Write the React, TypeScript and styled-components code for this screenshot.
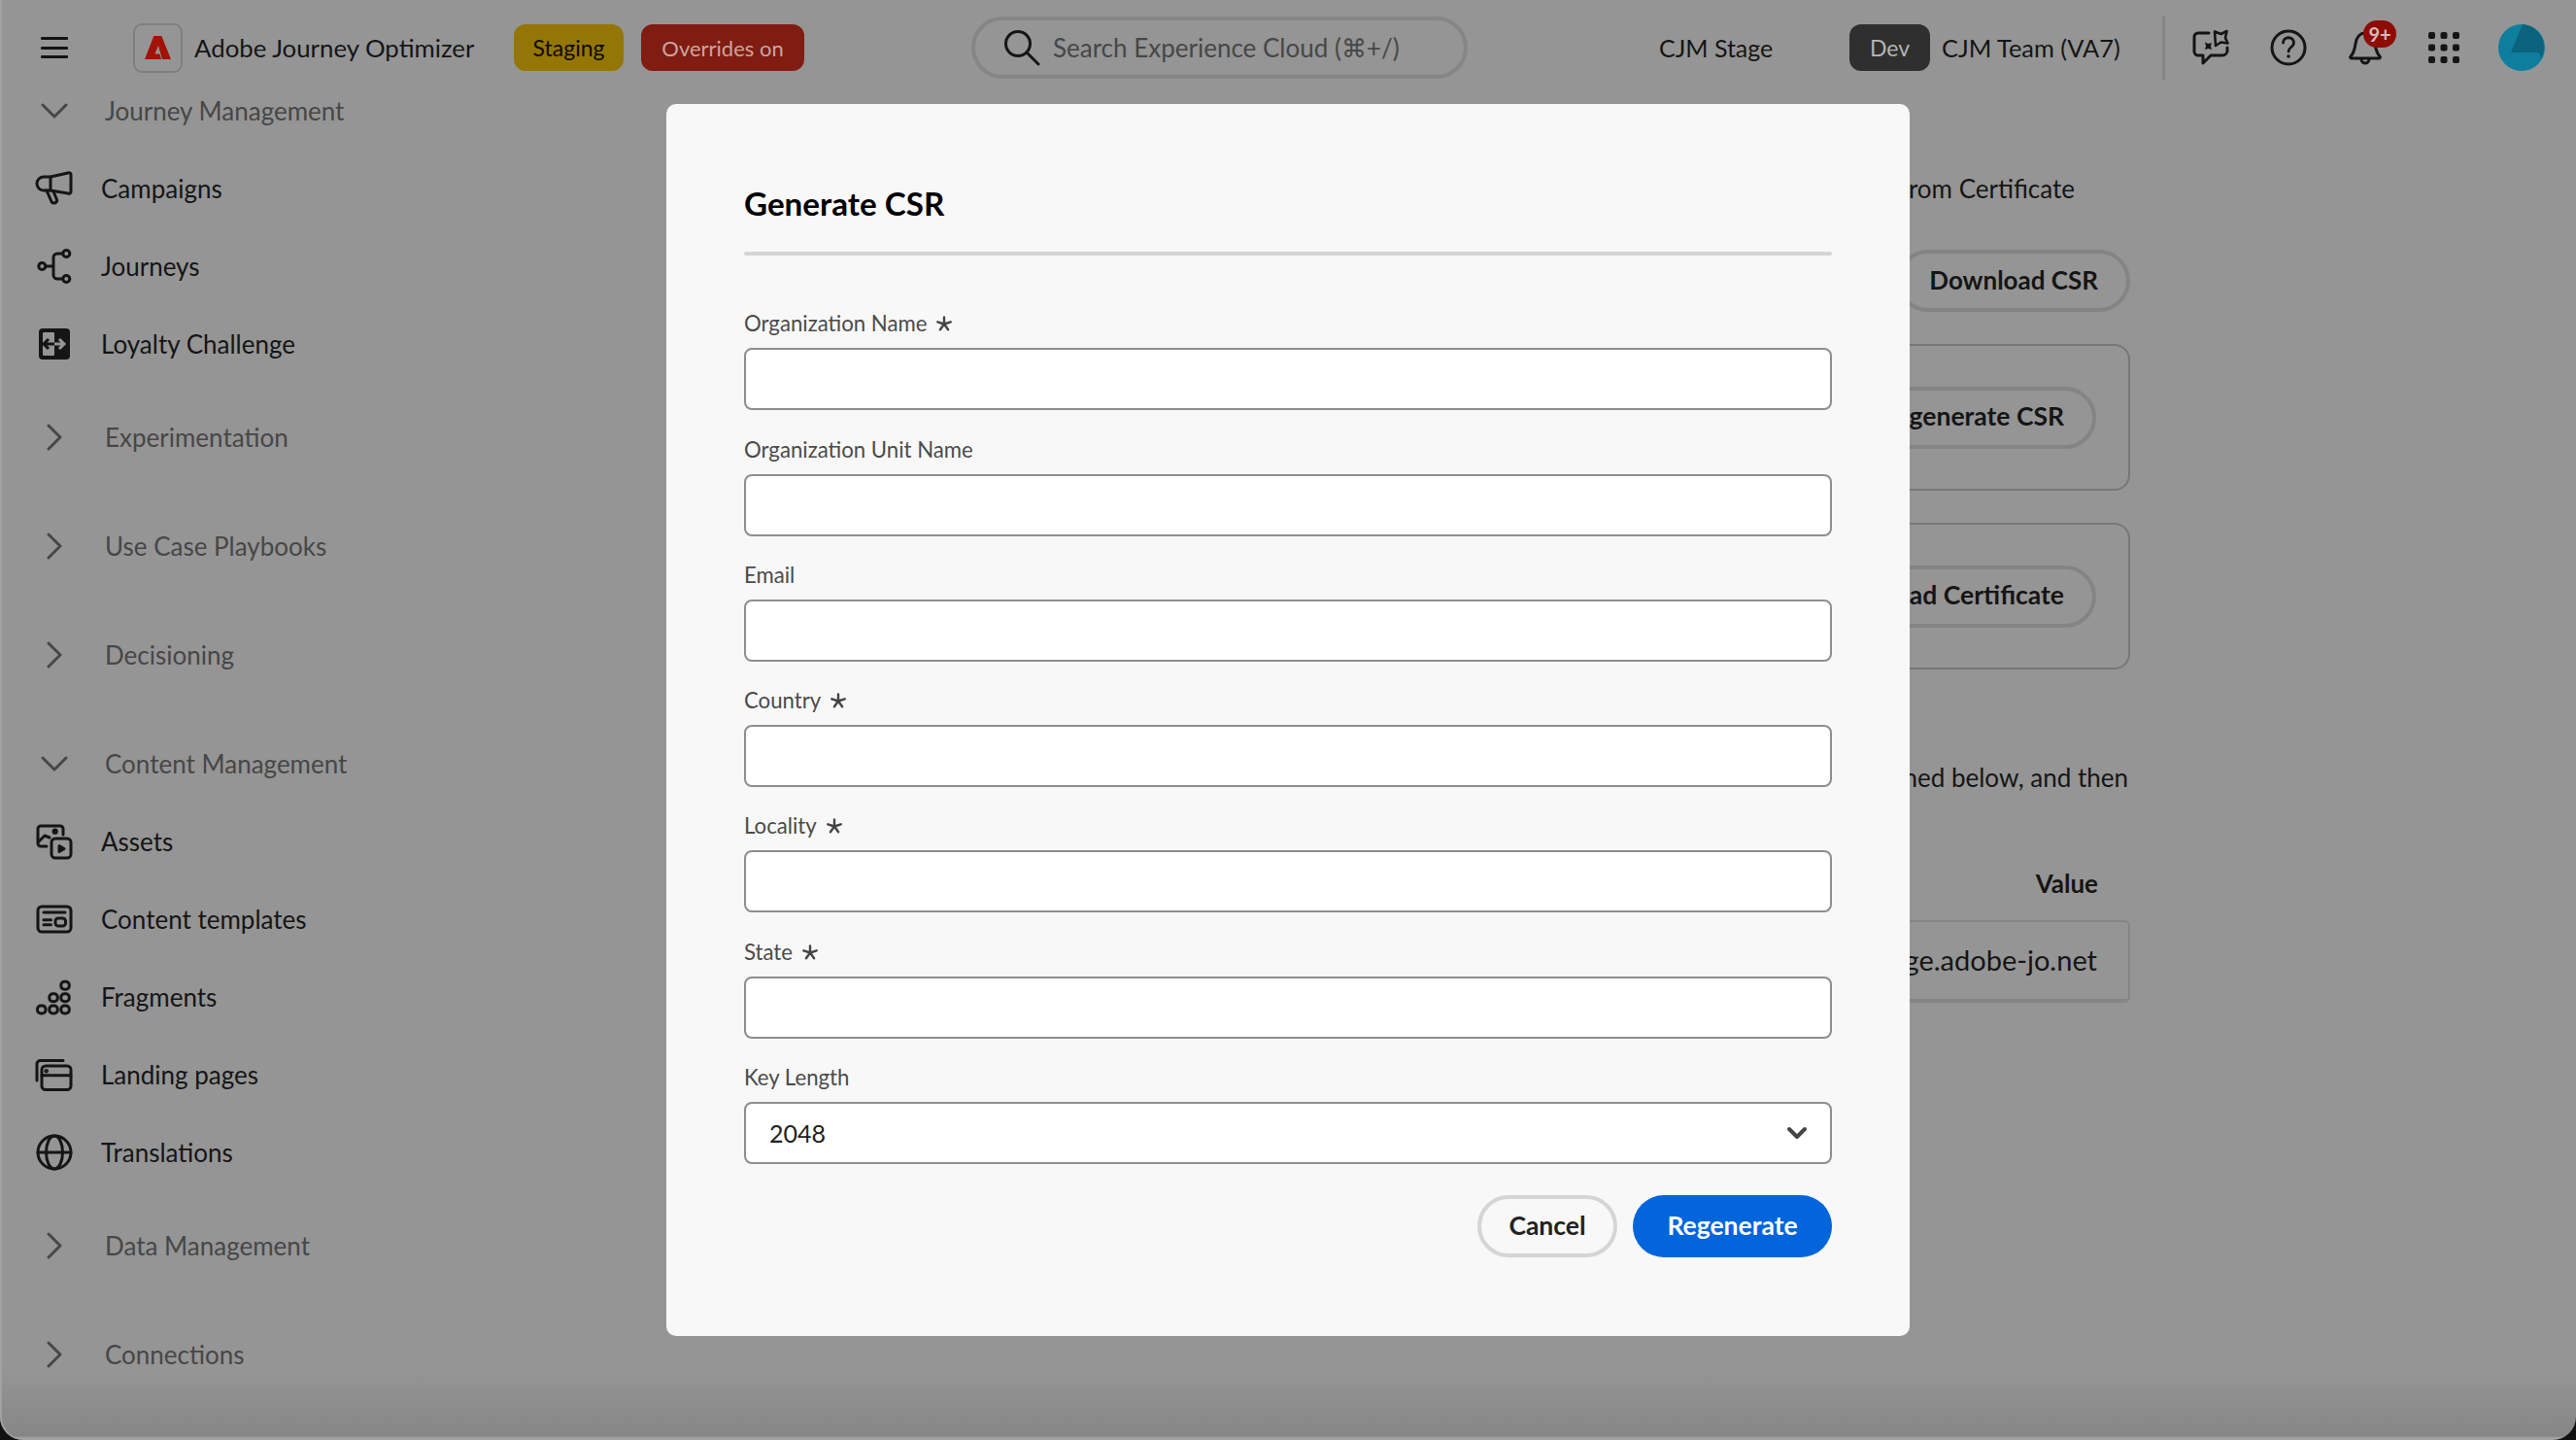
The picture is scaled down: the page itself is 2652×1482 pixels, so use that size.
import React from "react";
import styled, { createGlobalStyle } from "styled-components";

const GlobalStyle = createGlobalStyle`
  html, body {
    margin: 0;
    padding: 0;
    background: #111111;
  }
  * {
    box-sizing: border-box;
  }
`;

const FONT = `"Lato", "Noto Sans", sans-serif`;

const Page = styled.div`
  position: relative;
  width: 2652px;
  height: 1482px;
  overflow: hidden;
  font-family: ${FONT};
  background: linear-gradient(to bottom, #959595 0, #959595 1410px, #868686 1478px, #a3a3a3 1480px);
  border-radius: 0 0 24px 24px;
  box-shadow: inset 2px 0 0 #a2a2a2;
`;

const Header = styled.header`
  display: flex;
  align-items: center;
  height: 90px;
  padding: 8px 0 0 42px;
  position: relative;
  z-index: 1;
`;

const MenuBars = styled.div`
  display: flex;
  flex-direction: column;
  justify-content: space-between;
  width: 28px;
  height: 22px;
  margin-right: 67px;

  span {
    display: block;
    height: 3px;
    background: #141414;
    border-radius: 1px;
  }
`;

const LogoBox = styled.div`
  display: flex;
  align-items: center;
  justify-content: center;
  width: 51px;
  height: 51px;
  border: 2px solid #7f7f7f;
  border-radius: 9px;
  margin-right: 12px;
`;

const AppTitle = styled.span`
  font-size: 25.8px;
  color: #151515;
  white-space: nowrap;
  width: 329px;
`;

const Badge = styled.span<{ $bg: string; $fg: string; $width: number; $gap?: number; $size?: number }>`
  display: flex;
  align-items: center;
  justify-content: center;
  height: 48px;
  width: ${(p) => p.$width}px;
  margin-right: ${(p) => p.$gap ?? 0}px;
  background: ${(p) => p.$bg};
  color: ${(p) => p.$fg};
  border-radius: 12px;
  font-size: ${(p) => p.$size ?? 23}px;
  white-space: nowrap;
`;

const SearchBox = styled.div`
  display: flex;
  align-items: center;
  width: 511px;
  height: 64px;
  margin-left: 172px;
  padding-left: 29px;
  border: 4px solid #868686;
  border-radius: 32px;
  color: #474747;
  font-size: 26px;
  white-space: nowrap;

  svg {
    margin-right: 13px;
    flex: none;
  }
`;

const OrgName = styled.span`
  font-size: 25px;
  color: #151515;
  white-space: nowrap;
  margin-left: 197px;
  width: 196px;
`;

const TeamName = styled.span`
  font-size: 25.4px;
  color: #151515;
  white-space: nowrap;
  margin-left: 12px;
  width: 227px;
`;

const Divider = styled.div`
  width: 3px;
  height: 66px;
  background: #858585;
  border-radius: 2px;
  margin-right: 7px;
`;

const IconSlot = styled.div`
  position: relative;
  display: flex;
  align-items: center;
  justify-content: center;
  width: 80px;
  height: 40px;
`;

const CountBadge = styled.span`
  position: absolute;
  top: -8px;
  left: 37px;
  width: 34px;
  height: 28px;
  display: flex;
  align-items: center;
  justify-content: center;
  background: #8e0c04;
  color: #d2bcb9;
  border-radius: 14px;
  font-size: 20px;
  font-weight: 700;
`;

const Body = styled.div`
  display: flex;
  align-items: flex-start;
`;

const SideNav = styled.nav`
  width: 640px;
  flex: none;
  margin-top: -32px;
`;

const GroupRow = styled.div<{ $open?: boolean }>`
  display: flex;
  align-items: center;
  height: ${(p) => (p.$open ? 96 : 112)}px;
  padding-top: ${(p) => (p.$open ? 16 : 0)}px;
  color: #474747;
  font-size: 26px;

  svg {
    flex: none;
    margin-left: 42px;
    margin-right: 38px;
  }
`;

const ItemRow = styled.div`
  display: flex;
  align-items: center;
  height: 80px;
  color: #151515;
  font-size: 26px;

  svg {
    flex: none;
    margin-left: 36px;
    margin-right: 28px;
  }
`;

const Main = styled.main`
  flex: 1;
  display: flex;
  flex-direction: column;
  align-items: flex-end;
  padding: 87px 459px 0 0;
  color: #151515;
  font-size: 26px;
`;

const Line = styled.div<{ $top?: number; $right?: number }>`
  line-height: 34px;
  margin-top: ${(p) => p.$top ?? 0}px;
  margin-right: ${(p) => p.$right ?? 0}px;
  white-space: nowrap;
`;

const ValueHeading = styled.div`
  line-height: 34px;
  margin-top: 75px;
  margin-right: 33px;
  font-weight: 700;
`;

const OutlineButton = styled.div<{ $top?: number }>`
  display: flex;
  align-items: center;
  height: 64px;
  margin-top: ${(p) => p.$top ?? 0}px;
  padding: 0 29px 3px;
  border: 4px solid #848484;
  border-radius: 32px;
  font-weight: 700;
  white-space: nowrap;
`;

const Card = styled.div`
  display: flex;
  align-items: center;
  justify-content: flex-end;
  width: 1200px;
  height: 151px;
  margin-top: 33px;
  padding-right: 33px;
  border: 2px solid #777777;
  border-radius: 16px;
  font-size: 26.5px;
`;

const ValueBox = styled.div`
  display: flex;
  align-items: center;
  justify-content: flex-end;
  width: 1000px;
  height: 85px;
  margin-top: 21px;
  padding: 0 32px 2px 0;
  border: 2px solid #858585;
  border-bottom-width: 4px;
  border-radius: 6px;
  font-size: 29px;
`;

const Overlay = styled.div`
  position: absolute;
  inset: 0;
  z-index: 2;
  display: flex;
  align-items: center;
  justify-content: center;
`;

const Dialog = styled.section`
  width: 1280px;
  height: 1268px;
  padding: 79px 80px 0;
  background: #f8f8f8;
  border-radius: 10px;
`;

const DialogTitle = styled.h2`
  margin: 0;
  height: 73px;
  line-height: 46px;
  font-size: 33.2px;
  font-weight: 700;
  color: #000000;
`;

const TitleRule = styled.div`
  height: 4px;
  background: #d5d5d5;
  border-radius: 2px;
  margin-bottom: 30px;
`;

const Field = styled.div`
  height: 129.3px;
  display: flex;
  flex-direction: column;
  justify-content: flex-end;
`;

const FieldStack = styled.div`
  display: flex;
  flex-direction: column;
`;

const Label = styled.label`
  display: flex;
  align-items: center;
  font-size: 22.2px;
  line-height: 32px;
  color: #4b4b4b;
  margin-bottom: 9px;
`;

const Required = styled.span`
  margin-left: 9px;
  display: flex;
`;

const Input = styled.div`
  height: 64px;
  background: #ffffff;
  border: 2px solid #8e8e8e;
  border-radius: 8px;
  flex: none;
`;

const SelectBox = styled(Input)`
  display: flex;
  align-items: center;
  justify-content: space-between;
  padding: 0 23px 0 24px;
  font-size: 25px;
  color: #222222;
`;

const Actions = styled.div`
  display: flex;
  justify-content: flex-end;
  gap: 16px;
  margin-top: 32px;
`;

const PillButton = styled.button<{ $primary?: boolean }>`
  height: 64px;
  width: ${(p) => (p.$primary ? 205 : 144)}px;
  padding: 0 0 3px;
  border-radius: 32px;
  border: ${(p) => (p.$primary ? "none" : "4px solid #d5d5d5")};
  background: ${(p) => (p.$primary ? "#0265dc" : "transparent")};
  color: ${(p) => (p.$primary ? "#ffffff" : "#222222")};
  font-family: ${FONT};
  font-size: 26.5px;
  font-weight: 700;
`;

const stroke = { fill: "none", stroke: "#151515", strokeWidth: 3, strokeLinecap: "round", strokeLinejoin: "round" } as const;

function ChevronDown() {
  return (
    <svg width="28" height="16" viewBox="0 0 28 16">
      <path d="M2 2l12 12L26 2" fill="none" stroke="#474747" strokeWidth="3" strokeLinecap="round" strokeLinejoin="round" />
    </svg>
  );
}

function ChevronRight() {
  return (
    <svg width="28" height="28" viewBox="0 0 28 28">
      <path d="M8 2l12 12L8 26" fill="none" stroke="#474747" strokeWidth="3" strokeLinecap="round" strokeLinejoin="round" />
    </svg>
  );
}

function NavIcon({ children }: { children: React.ReactNode }) {
  return (
    <svg width="40" height="40" viewBox="0 0 40 40" {...stroke}>
      {children}
    </svg>
  );
}

const Star = () => (
  <svg width="18" height="18" viewBox="0 0 18 18">
    <path
      d="M9 9.500V2.500M9 9.500L15.700 7.300M9 9.500L13.100 15.200M9 9.500L4.900 15.200M9 9.500L2.300 7.300"
      stroke="#444444"
      strokeWidth="2.400"
      strokeLinecap="round"
    />
  </svg>
);

const navIcons: Record<string, React.ReactNode> = {
  Campaigns: (
    <>
      <path d="M16 8L34 4a2 2 0 0 1 3 2V23a2 2 0 0 1-3 2L16 22H9a7 7 0 0 1 0-14z" />
      <path d="M16 8v14" />
      <path d="M12 22l5 11.500c1.500 3 6.500 1 5.500-2L19 23" />
    </>
  ),
  Journeys: (
    <>
      <circle cx="7.300" cy="20" r="3.500" />
      <circle cx="32.300" cy="7" r="3.500" />
      <circle cx="32.300" cy="33" r="3.500" />
      <path d="M11 20h8M28.500 7H23a4 4 0 0 0-4 4v18a4 4 0 0 0 4 4h5.500" />
    </>
  ),
  Assets: (
    <>
      <path d="M29 13V7a3 3 0 0 0-3-3H6a3 3 0 0 0-3 3v15a3 3 0 0 0 3 3h6" />
      <path d="M4 20l6-6 5 2" />
      <circle cx="20.700" cy="9.700" r="1.600" fill="#151515" />
      <rect x="17" y="17" width="20" height="20" rx="4" />
      <path d="M25 24.500l5 3-5 3z" fill="#151515" />
    </>
  ),
  "Content templates": (
    <>
      <rect x="3" y="7" width="34" height="26" rx="4" />
      <path d="M9 13h22M9 20.700h7.500M9 25.700h7.500" />
      <rect x="21" y="19" width="10.500" height="8" rx="3" />
    </>
  ),
  Fragments: (
    <>
      <rect x="2.500" y="29" width="8.500" height="8" rx="3.500" />
      <rect x="14.800" y="29" width="8.500" height="8" rx="3.500" />
      <rect x="26.800" y="29" width="8.500" height="8" rx="3.500" />
      <rect x="14.800" y="16.700" width="8.500" height="8" rx="3.500" />
      <rect x="26.800" y="16.700" width="8.500" height="8" rx="3.500" />
      <rect x="26.800" y="4.300" width="8.500" height="8" rx="3.500" />
    </>
  ),
  "Landing pages": (
    <>
      <rect x="7" y="11" width="30" height="24.500" rx="4" />
      <path d="M7 20.700h30" />
      <circle cx="11.700" cy="16.200" r="0.800" fill="#151515" />
      <path d="M2 26V9a3.500 3.500 0 0 1 3.500-3.500H29" />
    </>
  ),
  Translations: (
    <>
      <circle cx="20" cy="20" r="17" />
      <ellipse cx="20" cy="20" rx="8.500" ry="17" />
      <path d="M3 20h34" />
    </>
  ),
};

const LoyaltyIcon = () => (
  <svg width="40" height="40" viewBox="0 0 40 40">
    <rect x="4" y="4" width="32" height="32" rx="4" fill="#151515" />
    <rect x="8" y="8" width="12" height="24" rx="1" fill="#959595" />
    <path d="M20 20H9M14 15l-5 5 5 5" fill="none" stroke="#151515" strokeWidth="3" />
    <path d="M20 20h10M25 15l5 5-5 5" fill="none" stroke="#959595" strokeWidth="3" />
  </svg>
);

const groups: { name: string; open?: boolean; items?: string[] }[] = [
  { name: "Journey Management", open: true, items: ["Campaigns", "Journeys", "Loyalty Challenge"] },
  { name: "Experimentation" },
  { name: "Use Case Playbooks" },
  { name: "Decisioning" },
  { name: "Content Management", open: true, items: ["Assets", "Content templates", "Fragments", "Landing pages", "Translations"] },
  { name: "Data Management" },
  { name: "Connections" },
];

const fields = [
  { label: "Organization Name", required: true },
  { label: "Organization Unit Name" },
  { label: "Email" },
  { label: "Country", required: true },
  { label: "Locality", required: true },
  { label: "State", required: true },
];

export default function App() {
  return (
    <Page>
      <GlobalStyle />
      <Header>
        <MenuBars>
          <span />
          <span />
          <span />
        </MenuBars>
        <LogoBox>
          <svg width="28" height="24" viewBox="0 0 28 24">
            <path d="M9.300 0H17.300L27 24H18L14 10 10.500 18.500H15.500L17 24H0Z" fill="#a31208" />
          </svg>
        </LogoBox>
        <AppTitle>Adobe Journey Optimizer</AppTitle>
        <Badge $bg="#947606" $fg="#0d0b00" $width={113} $gap={18}>Staging</Badge>
        <Badge $bg="#801c12" $fg="#c9a6a0" $width={168} $size={22}>Overrides on</Badge>
        <SearchBox>
          <svg width="38" height="38" viewBox="0 0 38 38">
            <circle cx="15" cy="15" r="12.500" fill="none" stroke="#151515" strokeWidth="3" />
            <path d="M24 24l12 12" stroke="#151515" strokeWidth="3" strokeLinecap="round" />
          </svg>
          Search Experience Cloud (⌘+/)
        </SearchBox>
        <OrgName>CJM Stage</OrgName>
        <Badge $bg="#2f2f2f" $fg="#b5b5b5" $width={83}>Dev</Badge>
        <TeamName>CJM Team (VA7)</TeamName>
        <Divider />
        <IconSlot>
          <svg width="40" height="40" viewBox="0 0 40 40">
            <path d="M18 5H7a4 4 0 0 0-4 4v15a4 4 0 0 0 4 4h5v8l8-8h12a5 5 0 0 0 5-5v-3" fill="none" stroke="#151515" strokeWidth="3" strokeLinejoin="round" strokeLinecap="round" />
            <path d="M24 3.500l6.500 2.500 6-3-1.500 7 2.500 5.500-7-1-5.500 3.500-.5-7z" fill="none" stroke="#151515" strokeWidth="2.600" strokeLinejoin="round" />
            <path d="M14 14.500l3.500 1.500 3.500-1-1 3.500 1 3.500-3.500-1-3.500 1 1-3.500z" fill="#151515" />
          </svg>
        </IconSlot>
        <IconSlot>
          <svg width="38" height="38" viewBox="0 0 38 38">
            <circle cx="19" cy="19" r="17" fill="none" stroke="#151515" strokeWidth="3" />
            <path d="M13.500 14c0-7 11-7 11 0 0 4.500-5.500 4.500-5.500 9" fill="none" stroke="#151515" strokeWidth="2.800" strokeLinecap="round" />
            <circle cx="19" cy="28" r="1.800" fill="#151515" />
          </svg>
        </IconSlot>
        <IconSlot>
          <svg width="38" height="38" viewBox="0 0 38 38">
            <path d="M3 28c3-3 4-6 5-13 1-7 5-11 10-11s9 4 10 11c1 7 2 10 5 13 1 1 0 2-1 2H4c-1 0-2-1-1-2z" fill="none" stroke="#151515" strokeWidth="3" strokeLinejoin="round" />
            <path d="M14 30.500c0 6 8 6 8 0" fill="none" stroke="#151515" strokeWidth="3" />
          </svg>
          <CountBadge>9+</CountBadge>
        </IconSlot>
        <IconSlot>
          <svg width="32" height="32" viewBox="0 0 32 32" fill="#151515">
            {[0, 12.500, 25].flatMap((y) =>
              [0, 12.500, 25].map((x) => <rect key={`${x}-${y}`} x={x} y={y} width="7" height="7" rx="2" />)
            )}
          </svg>
        </IconSlot>
        <IconSlot>
          <svg width="48" height="48" viewBox="0 0 48 48">
            <circle cx="24" cy="24" r="24" fill="#0d7e9e" />
            <path d="M25 0L13 29H41.700L44.300 35A24 24 0 0 0 25 0Z" fill="#0b637d" />
          </svg>
        </IconSlot>
      </Header>
      <Body>
        <SideNav>
          {groups.map((group) => (
            <div key={group.name}>
              <GroupRow $open={group.open}>
                {group.open ? <ChevronDown /> : <ChevronRight />}
                {group.name}
              </GroupRow>
              {group.items?.map((item) => (
                <ItemRow key={item}>
                  {item === "Loyalty Challenge" ? <LoyaltyIcon /> : <NavIcon>{navIcons[item]}</NavIcon>}
                  {item}
                </ItemRow>
              ))}
            </div>
          ))}
        </SideNav>
        <Main>
          <Line $right={57}>from Certificate</Line>
          <OutlineButton $top={46}>Download CSR</OutlineButton>
          <Card>
            <OutlineButton>Regenerate CSR</OutlineButton>
          </Card>
          <Card>
            <OutlineButton>Upload Certificate</OutlineButton>
          </Card>
          <Line $top={94} $right={2}>mentioned below, and then</Line>
          <ValueHeading>Value</ValueHeading>
          <ValueBox>stage.adobe-jo.net</ValueBox>
        </Main>
      </Body>
      <Overlay>
        <Dialog>
          <DialogTitle>Generate CSR</DialogTitle>
          <TitleRule />
          <FieldStack>
            {fields.map((field) => (
              <Field key={field.label}>
                <Label>
                  {field.label}
                  {field.required && (
                    <Required>
                      <Star />
                    </Required>
                  )}
                </Label>
                <Input />
              </Field>
            ))}
            <Field>
              <Label>Key Length</Label>
              <SelectBox>
                2048
                <svg width="22" height="14" viewBox="0 0 22 14">
                  <path d="M3 3l8 8 8-8" fill="none" stroke="#444444" strokeWidth="4" strokeLinecap="round" strokeLinejoin="round" />
                </svg>
              </SelectBox>
            </Field>
          </FieldStack>
          <Actions>
            <PillButton>Cancel</PillButton>
            <PillButton $primary>Regenerate</PillButton>
          </Actions>
        </Dialog>
      </Overlay>
    </Page>
  );
}
